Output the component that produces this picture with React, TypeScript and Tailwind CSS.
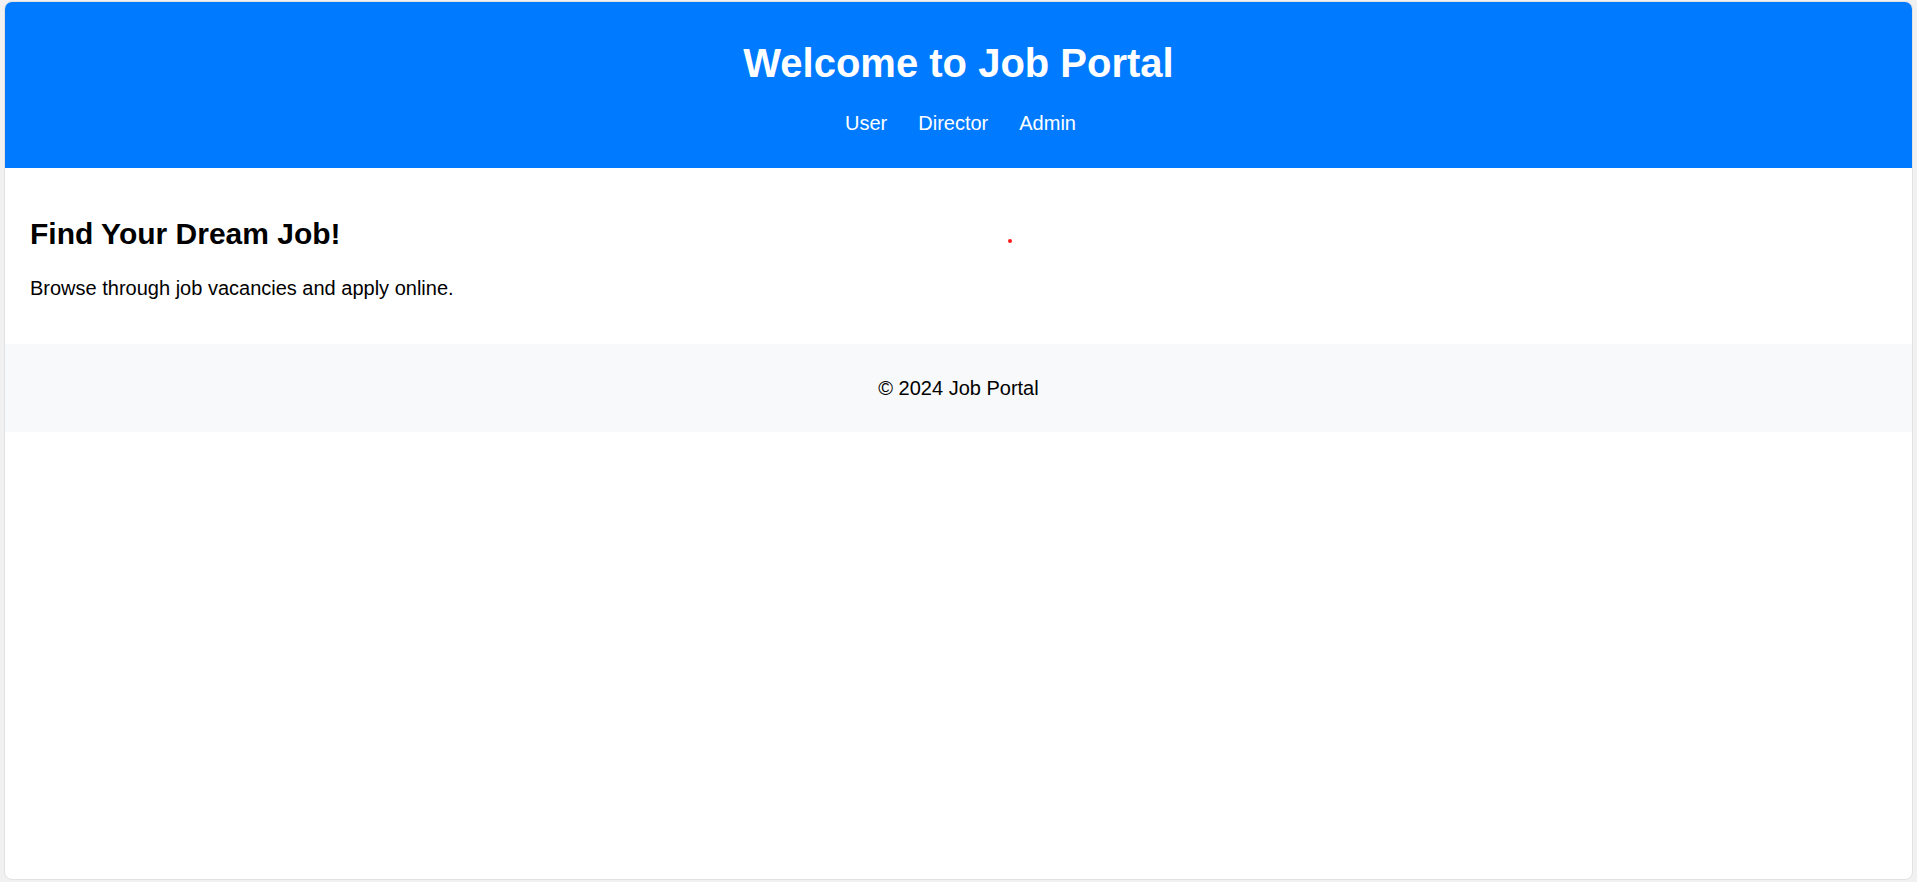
const links = ["User", "Director", "Admin"];

export default function App() {
  return (
    <div className="h-[882px] bg-[#f1f1f1] pt-[1px] pl-[4px] pr-[4px] pb-[2px] font-['Liberation_Sans',Arial,sans-serif] text-black">
      <div className="relative h-full rounded-[8px] border border-[#e2e2e2] bg-white overflow-hidden">
        {/* Header */}
        <header className="bg-[#007bff] text-white text-center pt-[38px] pb-[33px]">
          <h1 className="text-[40px] leading-[46px] font-bold">Welcome to Job Portal</h1>
          <nav className="mt-[26px] flex justify-center gap-[31px] text-[20px] leading-[23px] pl-[4px]">
            {links.map((l) => (
              <a key={l} href="#" className="text-white">
                {l}
              </a>
            ))}
          </nav>
        </header>

        {/* Main */}
        <main className="px-[25px] pt-[49px] pb-[44px]">
          <h2 className="text-[30px] leading-[34px] font-bold">Find Your Dream Job!</h2>
          <p className="mt-[26px] text-[20px] leading-[23px]">Browse through job vacancies and apply online.</p>
        </main>

        {/* Footer */}
        <footer className="h-[88px] bg-[#f8f9fa] flex items-center justify-center text-[20px] leading-[23px]">
          © 2024 Job Portal
        </footer>

        {/* stray red dot */}
        <div className="absolute left-[1003px] top-[237px] w-[4px] h-[4px] rounded-full bg-[#ff1a1a]" />
      </div>
    </div>
  );
}
